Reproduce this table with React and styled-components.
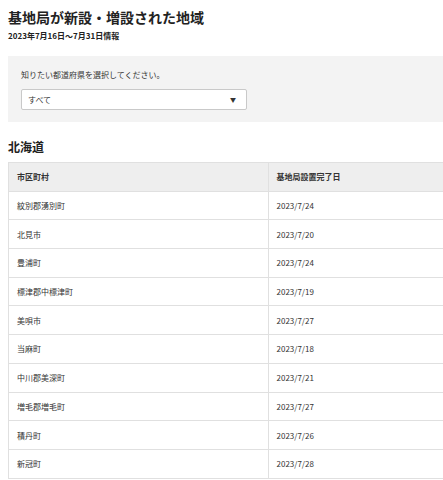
import React from 'react';
import styled, { createGlobalStyle } from 'styled-components';

const GlobalStyle = createGlobalStyle`
  html, body {
    margin: 0;
    padding: 0;
    background: #fff;
    overflow: hidden;
  }
  body {
    font-family: "Noto Sans CJK JP", "Noto Sans", sans-serif;
    color: #333;
  }
`;

const Page = styled.div`
  width: 520px;
  padding: 7px 0 0 8px;
`;

const Title = styled.h1`
  margin: 0;
  font-size: 14px;
  line-height: 21px;
  font-weight: 700;
  color: #222;
`;

const Period = styled.p`
  margin: 2px 0 0;
  font-size: 8px;
  line-height: 12px;
  font-weight: 700;
  color: #222;
`;

const FilterBox = styled.div`
  margin-top: 14px;
  background: #f3f3f3;
  padding: 13px 13px 12px;
`;

const FilterLabel = styled.div`
  font-size: 8px;
  line-height: 12px;
  color: #333;
`;

const Select = styled.div`
  margin-top: 8px;
  width: 226px;
  height: 21px;
  box-sizing: border-box;
  background: #fff;
  border: 1px solid #c9c9c9;
  border-radius: 2px;
  display: flex;
  align-items: center;
  justify-content: space-between;
  padding: 0 10px 0 6px;
  font-size: 8px;
  color: #333;
`;

const Arrow = styled.span`
  font-size: 6px;
  color: #333;
`;

const Region = styled.h2`
  margin: 16px 0 0;
  font-size: 12px;
  line-height: 18px;
  font-weight: 700;
  color: #222;
`;

const Table = styled.table`
  margin-top: 6px;
  width: 520px;
  border-collapse: collapse;
  table-layout: fixed;
  font-size: 8px;
`;

const Row = styled.tr`
  height: 28.7px;
`;

const Cell = styled.td`
  border: 1px solid #e0e0e0;
  padding: 0 8px;
  vertical-align: middle;
  color: #333;
  background: ${p => (p.$head ? '#eeeeee' : '#fff')};
  font-weight: ${p => (p.$head ? 700 : 400)};
`;

const rows = [
  ['紋別郡湧別町', '2023/7/24'],
  ['北見市', '2023/7/20'],
  ['豊浦町', '2023/7/24'],
  ['標津郡中標津町', '2023/7/19'],
  ['美唄市', '2023/7/27'],
  ['当麻町', '2023/7/18'],
  ['中川郡美深町', '2023/7/21'],
  ['増毛郡増毛町', '2023/7/27'],
  ['積丹町', '2023/7/26'],
  ['新冠町', '2023/7/28'],
];

export default function App() {
  return (
    <>
      <GlobalStyle />
      <Page>
        <Title>基地局が新設・増設された地域</Title>
        <Period>2023年7月16日〜7月31日情報</Period>
        <FilterBox>
          <FilterLabel>知りたい都道府県を選択してください。</FilterLabel>
          <Select>
            <span>すべて</span>
            <Arrow>▼</Arrow>
          </Select>
        </FilterBox>
        <Region>北海道</Region>
        <Table>
          <tbody>
            <Row>
              <Cell $head>市区町村</Cell>
              <Cell $head>基地局設置完了日</Cell>
            </Row>
            {rows.map(([city, date]) => (
              <Row key={city}>
                <Cell>{city}</Cell>
                <Cell>{date}</Cell>
              </Row>
            ))}
          </tbody>
        </Table>
      </Page>
    </>
  );
}
